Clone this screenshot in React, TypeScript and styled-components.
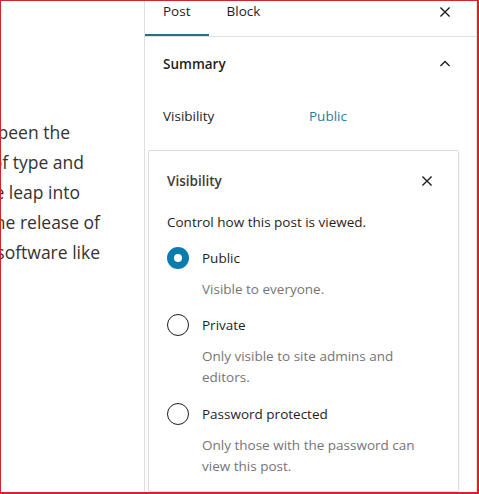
import React from 'react';
import styled, { createGlobalStyle } from 'styled-components';

const GlobalStyle = createGlobalStyle`
  html, body { margin: 0; padding: 0; background: #fff; }
  body { font-family: 'Open Sans', 'Noto Sans', sans-serif; color: #1e1e1e; }
`;

const Frame = styled.div`
  width: 479px;
  height: 494px;
  box-sizing: border-box;
  border: 1px solid #d4232b;
  border-right-width: 2px;
  border-bottom-width: 2px;
  display: flex;
  overflow: hidden;
`;

const Editor = styled.div`
  width: 143px;
  flex-shrink: 0;
  overflow: hidden;
  padding-top: 116px;
`;

// lines end at a fixed x; the start spills out to the left and is clipped
const EditorLine = styled.div<{ end: number }>`
  width: ${({ end }) => end}px;
  display: flex;
  justify-content: flex-end;
  white-space: nowrap;
  font-size: 17.5px;
  line-height: 30px;
  color: #333;
`;

const Sidebar = styled.div`
  flex: 1;
  border-left: 1px solid #e0e0e0;
  border-right: 1px solid #f0e0e0;
  display: flex;
  flex-direction: column;
`;

const TabBar = styled.div`
  height: 35px;
  border-bottom: 1px solid #e0e0e0;
  display: flex;
  align-items: flex-start;
`;

const Tab = styled.div<{ active?: boolean }>`
  height: 35px;
  box-sizing: border-box;
  padding: 0 18px;
  font-size: 13.5px;
  line-height: 21px;
  color: #1e1e1e;
  border-bottom: 2px solid ${({ active }) => (active ? '#2c6e85' : 'transparent')};
  margin-bottom: -1px;
`;

const IconButton = styled.button`
  margin-left: auto;
  background: none;
  border: 0;
  padding: 0;
  width: 24px;
  height: 24px;
  display: flex;
  align-items: center;
  justify-content: center;
  color: #1e1e1e;
  cursor: pointer;
`;

const TabClose = styled(IconButton)`
  margin-right: 19px;
  margin-top: -1px;
`;

const PanelHeader = styled.div`
  display: flex;
  align-items: center;
  padding: 15px 19px 0 18px;
  height: 24px;
  font-size: 13.5px;
  font-weight: 600;
`;

const Row = styled.div`
  display: flex;
  align-items: center;
  padding: 28px 18px 0;
  height: 24px;
  font-size: 13.5px;
`;

const RowLabel = styled.div`
  width: 146px;
`;

const RowValue = styled.div`
  color: #2a7ba3;
`;

const Popover = styled.div`
  margin: 22px 17px 0 3px;
  border: 1px solid #ddd;
  border-radius: 2px;
  box-shadow: 0 2px 6px rgba(0, 0, 0, 0.05);
  padding: 18px 18px 0;
  flex: 1;
`;

const PopoverHeader = styled.div`
  display: flex;
  align-items: center;
  height: 24px;
  font-size: 13.5px;
  font-weight: 600;
  color: #3a3a3a;
`;

const PopoverClose = styled(IconButton)`
  margin-right: 1px;
`;

const Intro = styled.div`
  margin-top: 19px;
  font-size: 13.5px;
  line-height: 20px;
  color: #1e1e1e;
`;

const Option = styled.div`
  display: grid;
  grid-template-columns: 22px 1fr;
  column-gap: 13px;
  margin-top: 14.5px;
  &:first-of-type {
    margin-top: 16px;
  }
`;

const Radio = styled.span<{ checked?: boolean }>`
  width: 22px;
  height: 22px;
  box-sizing: border-box;
  border-radius: 50%;
  border: ${({ checked }) => (checked ? '7px solid #0a7cb0' : '1.5px solid #1e1e1e')};
  background: #fff;
  align-self: center;
`;

const OptionLabel = styled.div`
  font-size: 13.5px;
  line-height: 22px;
  color: #1e1e1e;
`;

const OptionHelp = styled.div`
  grid-column: 2;
  margin-top: 10px;
  font-size: 13.5px;
  line-height: 21px;
  color: #757575;
`;

const CloseIcon = () => (
  <svg width="20" height="20" viewBox="0 0 24 24" fill="none" stroke="currentColor" strokeWidth="1.6">
    <path d="M6.5 6.5l11 11M17.5 6.5l-11 11" />
  </svg>
);

const ChevronUp = () => (
  <svg width="20" height="20" viewBox="0 0 24 24" fill="none" stroke="currentColor" strokeWidth="1.6">
    <path d="M6.5 14.5L12 9l5.5 5.5" />
  </svg>
);

const editorLines = [
  { text: 'Lorem Ipsum has been the', end: 69 },
  { text: 'took a galley of type and', end: 83 },
  { text: 'but also the leap into', end: 79 },
  { text: 'in the 1960s with the release of', end: 99 },
  { text: 'desktop publishing software like', end: 99 },
];

const options = [
  { label: 'Public', help: 'Visible to everyone.', checked: true },
  { label: 'Private', help: 'Only visible to site admins and editors.' },
  { label: 'Password protected', help: 'Only those with the password can view this post.' },
];

const App = () => (
  <>
    <GlobalStyle />
    <Frame>
      <Editor>
        {editorLines.map((l) => (
          <EditorLine key={l.text} end={l.end}>
            <span>{l.text}</span>
          </EditorLine>
        ))}
      </Editor>
      <Sidebar>
        <TabBar>
          <Tab active>Post</Tab>
          <Tab>Block</Tab>
          <TabClose aria-label="Close settings"><CloseIcon /></TabClose>
        </TabBar>
        <PanelHeader>
          Summary
          <IconButton aria-label="Collapse"><ChevronUp /></IconButton>
        </PanelHeader>
        <Row>
          <RowLabel>Visibility</RowLabel>
          <RowValue>Public</RowValue>
        </Row>
        <Popover>
          <PopoverHeader>
            Visibility
            <PopoverClose aria-label="Close"><CloseIcon /></PopoverClose>
          </PopoverHeader>
          <Intro>Control how this post is viewed.</Intro>
          {options.map((o) => (
            <Option key={o.label}>
              <Radio checked={o.checked} />
              <OptionLabel>{o.label}</OptionLabel>
              <OptionHelp>{o.help}</OptionHelp>
            </Option>
          ))}
        </Popover>
      </Sidebar>
    </Frame>
  </>
);

export default App;
